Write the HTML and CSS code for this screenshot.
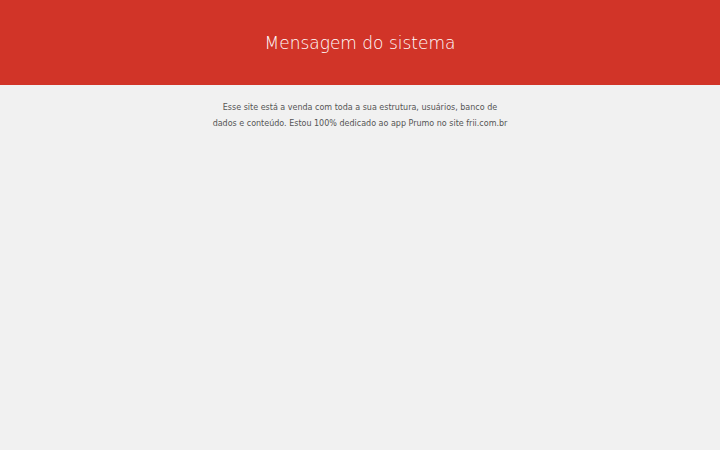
FILE: index.html
```html
<!DOCTYPE html>
<html lang="pt-BR">
<head>
    <meta charset="UTF-8">
    <meta name="viewport" content="width=device-width, initial-scale=1.0">
    <title>Mensagem do sistema</title>
    <link rel="stylesheet" href="styles.css">
</head>
<body>
    <div class="header">
        <h1>Mensagem do sistema</h1>
    </div>

    <div class="message">
        <p>Esse site está a venda com toda a sua estrutura, usuários, banco de dados e conteúdo. Estou 100% dedicado ao app Prumo no site frii.com.br</p>
    </div>
</body>
</html>
```

FILE: styles.css
```css
body {
    font-family: "DejaVu Sans", sans-serif;
    margin: 0;
    padding: 0;
    background: #f1f1f1;
    color: #555;
}

.header {
    background: #d13428;
    height: 85px;
    display: flex;
    justify-content: center;
    align-items: center;
}

.header h1 {
    margin: 0;
    font-size: 17px;
    font-weight: 300;
    color: #fff;
}

.message {
    width: 300px;
    margin: 0 auto;
    padding-top: 15px;
    text-align: center;
}

.message p {
    margin: 0;
    font-size: 8px;
    line-height: 15.5px;
}
```
